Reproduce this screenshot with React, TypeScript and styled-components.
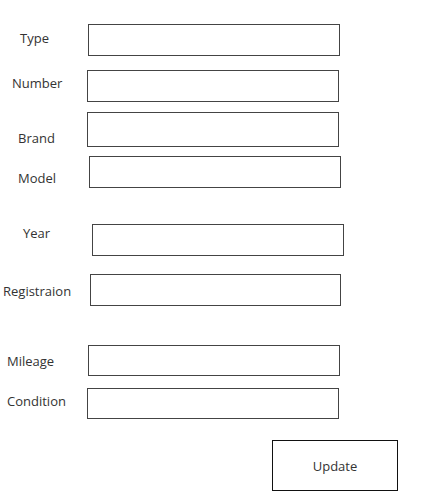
import styled, { createGlobalStyle } from 'styled-components';

const GlobalStyle = createGlobalStyle`
  body {
    margin: 0;
    background: #fff;
    font-family: "Open Sans", "Noto Sans", sans-serif;
  }
`;

interface RowProps {
  $gap: number;
  $boxLeft: number;
  $boxWidth: number;
  $height: number;
}

interface LabelProps {
  $left: number;
  $drop: number;
}

const Form = styled.form`
  display: flex;
  flex-direction: column;
  width: 438px;
`;

const Row = styled.div<RowProps>`
  display: grid;
  grid-template-columns: ${(p) => p.$boxLeft}px ${(p) => p.$boxWidth}px;
  height: ${(p) => p.$height}px;
  margin-top: ${(p) => p.$gap}px;
  align-items: start;
`;

const Label = styled.label<LabelProps>`
  padding-left: ${(p) => p.$left}px;
  margin-top: ${(p) => p.$drop}px;
  font-size: 13px;
  line-height: 18px;
  color: #333;
  white-space: nowrap;
`;

const Field = styled.input`
  box-sizing: border-box;
  width: 100%;
  height: 100%;
  margin: 0;
  border: 1.5px solid #444;
  border-radius: 0;
  background: #fff;
  outline: none;
`;

const ButtonRow = styled.div`
  display: flex;
  margin-top: 21px;
  padding-left: 272px;
`;

const UpdateButton = styled.button`
  box-sizing: border-box;
  width: 126px;
  height: 51px;
  border: 1px solid #111;
  background: #fff;
  color: #333;
  font-family: "Open Sans", "Noto Sans", sans-serif;
  font-size: 13px;
  padding: 0;
`;

const fields = [
  { name: 'Type', gap: 24, labelLeft: 20, drop: 5, boxLeft: 88, boxWidth: 252, h: 32 },
  { name: 'Number', gap: 14, labelLeft: 12, drop: 4, boxLeft: 87, boxWidth: 252, h: 32 },
  { name: 'Brand', gap: 10, labelLeft: 18, drop: 17, boxLeft: 87, boxWidth: 252, h: 32 },
  { name: 'Model', gap: 12, labelLeft: 18, drop: 13, boxLeft: 89, boxWidth: 252, h: 32 },
  { name: 'Year', gap: 36, labelLeft: 23, drop: 0, boxLeft: 92, boxWidth: 252, h: 32 },
  { name: 'Registraion', gap: 18, labelLeft: 3, drop: 8, boxLeft: 90, boxWidth: 251, h: 32 },
  { name: 'Mileage', gap: 39, labelLeft: 7, drop: 7, boxLeft: 88, boxWidth: 252, h: 31 },
  { name: 'Condition', gap: 12, labelLeft: 7, drop: 4, boxLeft: 87, boxWidth: 252, h: 31 },
];

export default function App() {
  return (
    <>
      <GlobalStyle />
      <Form onSubmit={(e) => e.preventDefault()}>
        {fields.map((f) => (
          <Row key={f.name} $gap={f.gap} $boxLeft={f.boxLeft} $boxWidth={f.boxWidth} $height={f.h}>
            <Label $left={f.labelLeft} $drop={f.drop}>{f.name}</Label>
            <Field type="text" aria-label={f.name} />
          </Row>
        ))}
        <ButtonRow>
          <UpdateButton type="submit">Update</UpdateButton>
        </ButtonRow>
      </Form>
    </>
  );
}
